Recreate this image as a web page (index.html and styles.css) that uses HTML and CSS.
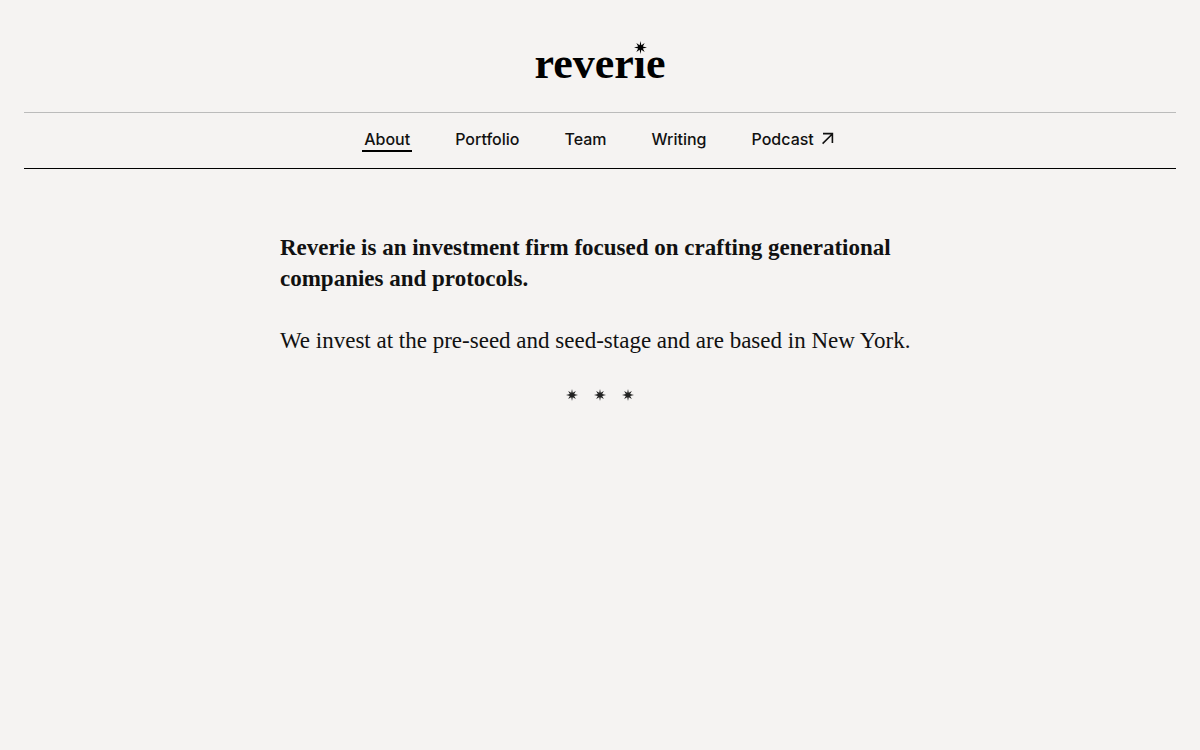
FILE: index.html
```html
<!DOCTYPE html>
<html lang="en">
<head>
  <meta charset="UTF-8" />
  <meta name="viewport" content="width=device-width, initial-scale=1.0"/>
  <title>Reverie</title>
  <link rel="stylesheet" href="styles.css">
</head>
<body>
  <svg width="0" height="0" class="sprite" aria-hidden="true">
    <symbol id="star" viewBox="-10 -10 20 20">
      <path d="M0 -10 L1.3 -3.6 L6.4 -6.8 L3.6 -1.5 L10 0 L3.6 1.5 L6.4 6.8 L1.3 3.6 L0 10 L-1.3 3.6 L-6.4 6.8 L-3.6 1.5 L-10 0 L-3.6 -1.5 L-6.4 -6.8 L-1.3 -3.6 Z"/>
    </symbol>
  </svg>

  <header class="header">
    <a class="logo" href="#" aria-label="reverie">rever<span class="logo-i">ı<svg class="logo-star"><use href="#star"/></svg></span>e</a>
    <nav class="nav">
      <a class="nav-link active" href="#">About</a>
      <a class="nav-link" href="#">Portfolio</a>
      <a class="nav-link" href="#">Team</a>
      <a class="nav-link" href="#">Writing</a>
      <a class="nav-link" href="#">Podcast
        <svg class="arrow" viewBox="0 0 16 16"><path d="M2.6 11.6 L12.3 2 M3 1.6 H12.4 V11"/></svg>
      </a>
    </nav>
  </header>

  <main class="content">
    <p class="lead">Reverie is an investment firm focused on crafting generational companies and protocols.</p>
    <p>We invest at the pre-seed and seed-stage and are based in New York.</p>
    <div class="divider">
      <svg><use href="#star"/></svg>
      <svg><use href="#star"/></svg>
      <svg><use href="#star"/></svg>
    </div>
  </main>
</body>
</html>
```
FILE: styles.css
```css
:root {
  --bg: #f5f3f2;
  --text: #111;
  --rule: #bbb;
}

* {
  box-sizing: border-box;
}

body {
  margin: 0;
  background: var(--bg);
  color: var(--text);
  font-family: "Liberation Serif", serif;
}

.sprite {
  position: absolute;
}

.header {
  margin: 0 24px;
  border-bottom: 1px solid #000;
  text-align: center;
}

.logo {
  display: block;
  width: fit-content;
  margin: 0 auto;
  padding-top: 38px;
  height: 112px;
  color: #000;
  font-size: 44px;
  font-weight: 700;
  line-height: 52px;
  text-decoration: none;
}

.logo-i {
  position: relative;
}

/* the star stands in for the dot of the i */
.logo-star {
  position: absolute;
  top: 2px;
  left: 0;
  width: 13px;
  height: 13px;
}

.nav {
  display: flex;
  justify-content: center;
  gap: 41px;
  padding: 16px 0;
  border-top: 1px solid var(--rule);
}

.nav-link {
  display: flex;
  align-items: center;
  gap: 6px;
  padding: 0 2px;
  border-bottom: 2px solid transparent;
  color: var(--text);
  font-family: Inter, sans-serif;
  font-size: 16px;
  font-weight: 450;
  line-height: 21px;
  text-decoration: none;
}

.nav-link.active {
  border-color: #000;
}

.arrow {
  width: 16px;
  height: 16px;
  fill: none;
  stroke: var(--text);
  stroke-width: 1.6;
}

.content {
  max-width: 688px;
  margin: 0 auto;
  padding: 63px 24px;
  font-size: 23px;
  line-height: 31px;
}

.content p {
  margin: 0 0 31px;
}

.lead {
  font-weight: 700;
}

.divider {
  display: flex;
  justify-content: center;
  gap: 16px;
  padding-top: 2px;
}

.divider svg {
  width: 12px;
  height: 12px;
  fill: #222;
}
```
